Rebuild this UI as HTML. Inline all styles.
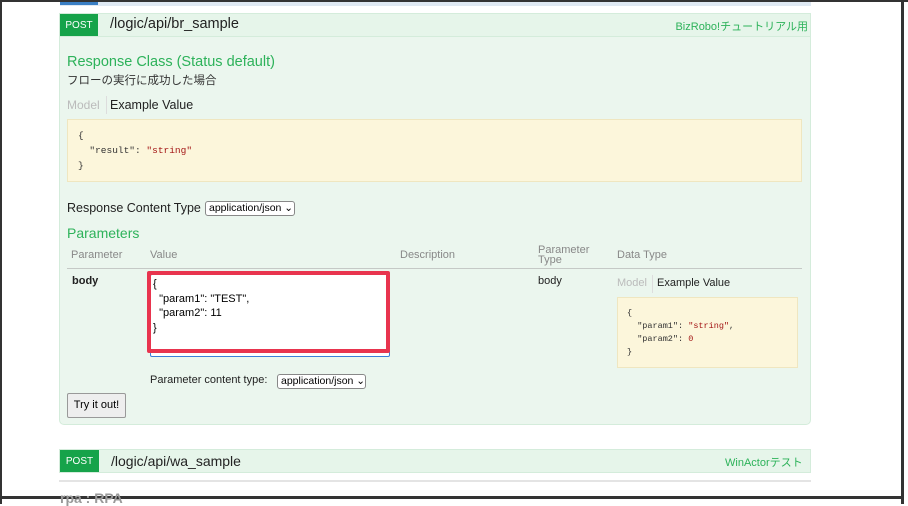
<!DOCTYPE html>
<html><head><meta charset="utf-8"><style>
*{margin:0;padding:0;box-sizing:border-box}
body{width:908px;height:504px;background:#fff;position:relative;overflow:hidden;font-family:"Liberation Sans","Noto Sans CJK JP",sans-serif;color:#222}
.a{position:absolute;white-space:nowrap}
.mono{font-family:"Liberation Mono","DejaVu Sans Mono",monospace}
.sel{position:absolute;border:1px solid #888;border-radius:3px;background:#fff;font-size:10.5px;padding:0 3px;height:15px;line-height:13px;color:#000;white-space:nowrap;overflow:hidden}
</style></head><body>
<div class="a" style="left:0;top:0;width:908px;height:2px;background:#333"></div>
<div class="a" style="left:0;top:0;width:2px;height:504px;background:#333"></div>
<div class="a" style="left:901px;top:0;width:3px;height:504px;background:#333"></div>
<div class="a" style="left:0;top:496px;width:904px;height:3px;background:#333"></div>
<div class="a" style="left:60px;top:2px;width:751px;height:4px;background:#dfe9f3"></div>
<div class="a" style="left:60px;top:2px;width:38px;height:3px;background:#3b7fc4"></div>

<div class="a" style="left:59px;top:13px;width:752px;height:412px;background:#ebf6ee;border:1px solid #d4ecdb;border-radius:0 0 5px 5px"></div>
<div class="a" style="left:59px;top:13px;width:752px;height:24px;background:#e6f5ea;border:1px solid #d4ecdb"></div>
<div class="a" style="left:60px;top:14px;width:38px;height:22px;background:#16a34a;color:#fff;font-size:10px;line-height:24px;text-align:center">POST</div>
<div class="a" style="left:110px;top:16px;font-size:14.5px;color:#222">/logic/api/br_sample</div>
<div class="a" style="right:100px;top:18px;font-size:11px;color:#2db25a">BizRobo!チュートリアル用</div>

<div class="a" style="left:67px;top:54px;font-size:14.5px;color:#2db25a">Response Class (Status default)</div>
<div class="a" style="left:67px;top:72px;font-size:11.5px;color:#333">フローの実行に成功した場合</div>
<div class="a" style="left:67px;top:98px;font-size:12px;color:#bbb">Model</div>
<div class="a" style="left:106px;top:96px;width:1px;height:18px;background:#ddd"></div>
<div class="a" style="left:110px;top:98px;font-size:12.5px;color:#222">Example Value</div>
<div class="a mono" style="left:67px;top:119px;width:735px;height:63px;background:#fcf6db;border:1px solid #efe6c0;font-size:9.5px;line-height:15px;padding:8px 10px;color:#333;white-space:pre">{
  "result": <span style="color:#a31515">"string"</span>
}</div>

<div class="a" style="left:67px;top:201px;font-size:12.5px;color:#222">Response Content Type</div>
<div class="sel" style="left:205px;top:201px;width:90px">application/json ⌄</div>
<div class="a" style="left:67px;top:225px;font-size:14px;color:#2db25a">Parameters</div>

<div class="a" style="left:71px;top:249px;font-size:11px;color:#888">Parameter</div>
<div class="a" style="left:150px;top:249px;font-size:11px;color:#888">Value</div>
<div class="a" style="left:400px;top:249px;font-size:11px;color:#888">Description</div>
<div class="a" style="left:538px;top:245px;font-size:11px;color:#888;line-height:10px">Parameter<br>Type</div>
<div class="a" style="left:617px;top:249px;font-size:11px;color:#888">Data Type</div>
<div class="a" style="left:67px;top:268px;width:735px;height:1px;background:#c5c9c6"></div>

<div class="a" style="left:72px;top:275px;font-size:11px;font-weight:bold;color:#222">body</div>
<div class="a" style="left:150px;top:274px;width:240px;height:83px;background:#fff;border:1px solid #3b7fd8;border-radius:2px"></div>
<div class="a" style="left:147px;top:271px;width:243px;height:82px;border:4px solid #e8344e;border-radius:2px"></div>
<div class="a" style="left:153px;top:277px;font-size:11px;line-height:14.5px;color:#000;white-space:pre">{
  "param1": "TEST",
  "param2": 11
}</div>
<div class="a" style="left:150px;top:374px;font-size:11px;color:#222">Parameter content type:</div>
<div class="sel" style="left:277px;top:374px;width:89px">application/json ⌄</div>
<div class="a" style="left:67px;top:393px;width:59px;height:25px;background:#eee;border:1px solid #999;border-radius:2px;font-size:11px;line-height:23px;text-align:center;color:#000">Try it out!</div>

<div class="a" style="left:538px;top:275px;font-size:11px;color:#222">body</div>
<div class="a" style="left:617px;top:277px;font-size:11px;color:#bbb">Model</div>
<div class="a" style="left:652px;top:275px;width:1px;height:18px;background:#ddd"></div>
<div class="a" style="left:657px;top:277px;font-size:11px;color:#222">Example Value</div>
<div class="a mono" style="left:617px;top:297px;width:181px;height:71px;background:#fcf6db;border:1px solid #efe6c0;font-size:8.5px;line-height:13px;padding:9px 9px;color:#333;white-space:pre">{
  "param1": <span style="color:#a31515">"string"</span>,
  "param2": <span style="color:#a31515">0</span>
}</div>

<div class="a" style="left:59px;top:449px;width:752px;height:24px;background:#e6f5ea;border:1px solid #d4ecdb"></div>
<div class="a" style="left:60px;top:450px;width:39px;height:22px;background:#16a34a;color:#fff;font-size:10px;line-height:24px;text-align:center">POST</div>
<div class="a" style="left:111px;top:453px;font-size:14px;color:#222">/logic/api/wa_sample</div>
<div class="a" style="left:725px;top:454px;font-size:11px;color:#2db25a">WinActorテスト</div>
<div class="a" style="left:59px;top:480px;width:752px;height:2px;background:#e4e4e4"></div>
<div class="a" style="left:60px;top:490px;font-size:14px;font-weight:bold;color:#999">rpa : RPA</div>
</body></html>
